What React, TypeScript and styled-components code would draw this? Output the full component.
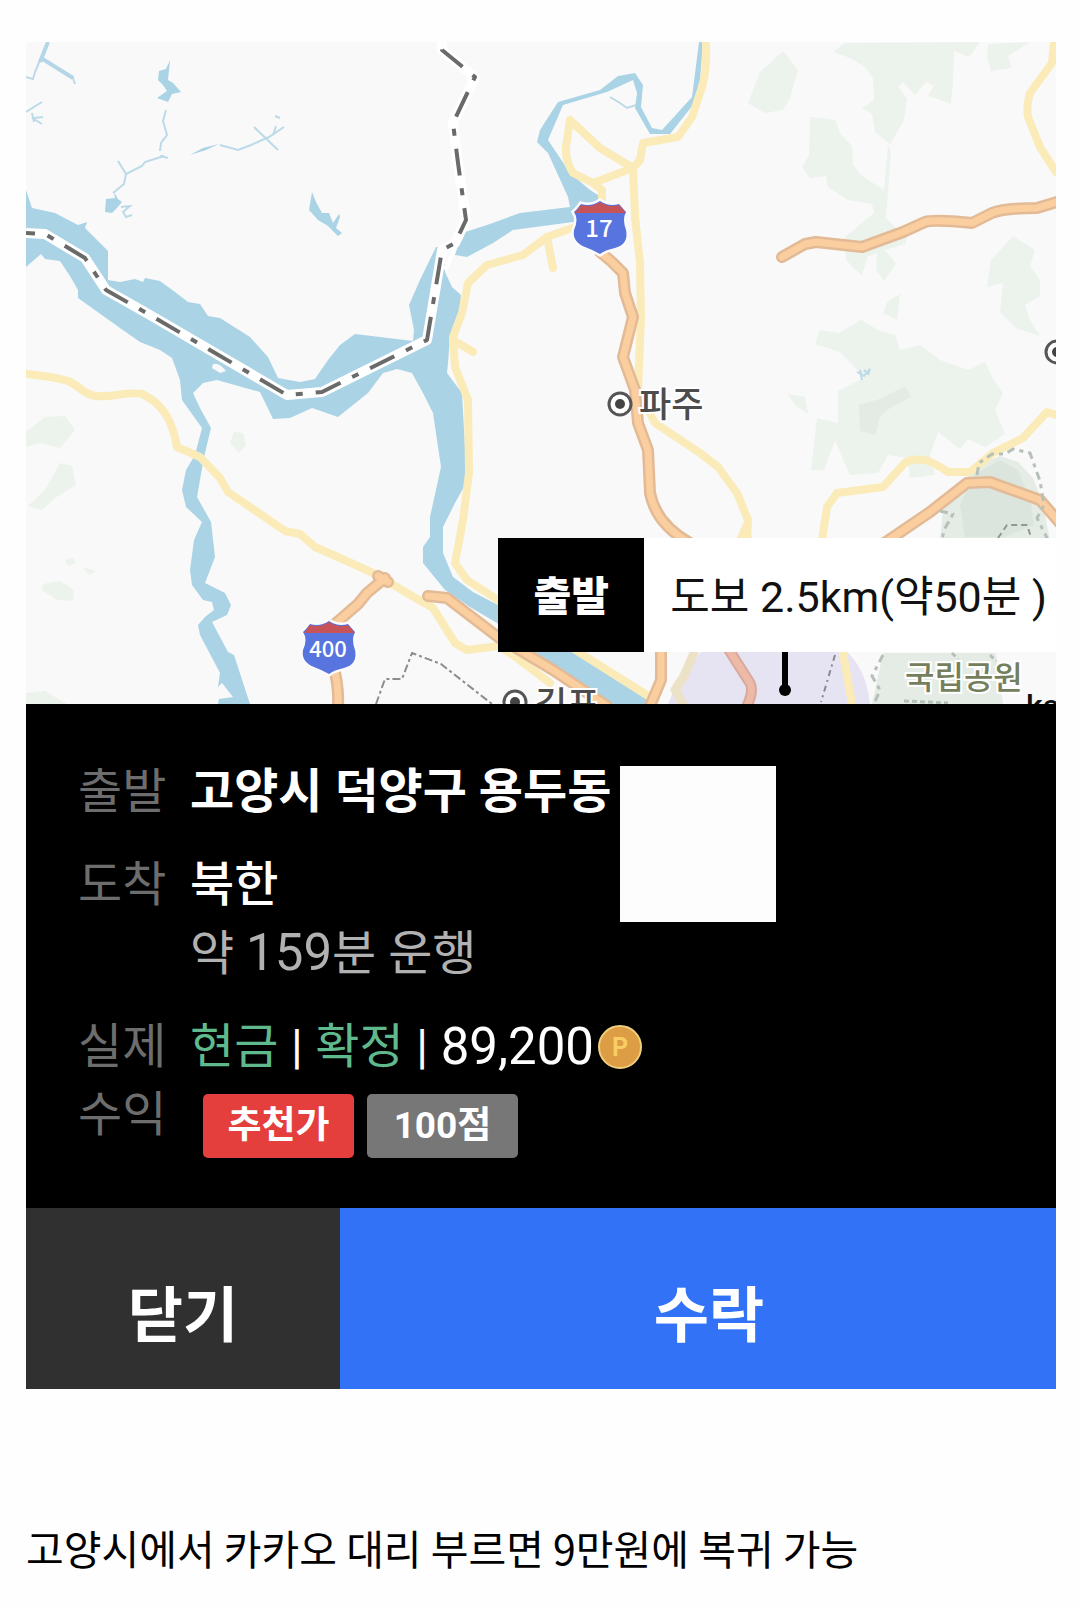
import React from "react";
import styled, { createGlobalStyle } from "styled-components";

const GlobalStyle = createGlobalStyle`
  *, *::before, *::after { box-sizing: border-box; }
  body {
    margin: 0;
    background: #fefefe;
    color: #000;
    font-family: Roboto, "Noto Sans CJK KR", sans-serif;
    word-break: keep-all;
  }
`;

const Page = styled.main`
  padding: 42px 23px 20px 26px;
`;

const Card = styled.article`
  display: flex;
  flex-direction: column;
`;

const MapArea = styled.section`
  position: relative;
  overflow: hidden;
  background: #f9f9f9;
`;

const MapDrawing = styled.svg`
  display: block;
  width: 100%;
  height: auto;
  font-family: "Noto Sans CJK KR", sans-serif;
`;

const WalkBar = styled.div`
  position: absolute;
  right: 0;
  bottom: 52px;
  display: flex;
  height: 114px;
  background: #fff;
`;

const WalkTag = styled.strong`
  display: grid;
  place-items: center;
  width: 146px;
  padding-bottom: 4px;
  background: #000;
  color: #fff;
  font-size: 41px;
  font-weight: 900;
`;

const WalkText = styled.span`
  display: flex;
  align-items: center;
  padding: 0 9px 4px 26px;
  color: #111;
  font-size: 43px;
  white-space: pre;
`;

const Details = styled.section`
  display: flex;
  flex-direction: column;
  gap: 25px;
  padding: 54px 52px 50px;
  background: #000;
  color: #fff;
  font-size: 48px;
  line-height: 68px;
`;

const Route = styled.div`
  display: flex;
  align-items: flex-start;
`;

const Rows = styled.dl`
  display: grid;
  grid-template-columns: 100px auto;
  column-gap: 12px;
  row-gap: 25px;
  margin: 0;
`;

const Label = styled.dt`
  color: #6d6d6d;
`;

const Value = styled.dd<{ $strong?: boolean }>`
  margin: 0;
  font-weight: ${(p) => (p.$strong ? 700 : 400)};
`;

const Destination = styled.div`
  font-weight: 500;
`;

const Duration = styled.div`
  color: #b1b1b1;
`;

const Figure = styled.span`
  font-size: 51px;
`;

const Cover = styled.div`
  width: 156px;
  height: 156px;
  margin: 8px 0 0 9px;
  background: #fdfdfd;
`;

const PayLine = styled.div`
  display: flex;
  align-items: center;
  height: 68px;
`;

const Status = styled.span`
  color: #5fb98c;
`;

const Divider = styled.span`
  width: 37px;
  text-align: center;
`;

const Coin = styled.svg`
  width: 44px;
  height: 44px;
  margin-left: 4px;
`;

const Tags = styled.div`
  display: flex;
  gap: 13px;
  padding: 13px 0 0 13px;
`;

const Tag = styled.span<{ $color: string }>`
  display: flex;
  align-items: center;
  justify-content: center;
  width: 151px;
  height: 64px;
  border-radius: 5px;
  background: ${(p) => p.$color};
  font-size: 37px;
  font-weight: 700;
`;

const Actions = styled.div`
  display: grid;
  grid-template-columns: 314fr 716fr;
`;

const Action = styled.button<{ $color: string; $inset?: number }>`
  height: 181px;
  padding: 24px 0 0 ${(p) => p.$inset ?? 0}px;
  border: 0;
  background: ${(p) => p.$color};
  color: #fff;
  font-family: inherit;
  font-size: 60px;
  font-weight: 700;
  cursor: pointer;
`;

const Caption = styled.p`
  margin: 128px 0 0;
  font-family: "Noto Sans CJK KR", sans-serif;
  font-size: 41px;
  line-height: 60px;
`;

const forests = [
  "783,51 798,70 790,98 783,110 765,113 748,103 760,72",
  "833,52 845,43 980,42 969,57 954,51 953,80 951,104 935,98 928,96 934,86 926,82 915,95 903,82 898,86 907,99 904,120 890,144 875,132 872,114 862,108 874,100 873,78 864,66 850,58",
  "988,44 1030,42 1008,56 1012,68 991,71 987,57",
  "810,117 835,120 841,135 852,146 853,165 862,176 884,190 888,145 891,152 886,218 898,230 910,226 905,244 885,250 896,264 884,281 876,270 877,253 867,257 862,276 846,260 845,237 874,213 872,204 848,200 828,187 826,176 810,178 802,167 809,155",
  "1013,236 1035,250 1030,266 1040,280 1040,296 1025,305 1030,320 1040,336 1016,328 1000,312 1003,283 987,287 991,260",
  "900,294 897,320 883,313 887,302",
  "861,320 878,330 895,335 900,350 920,345 940,360 968,370 985,362 993,379 1003,393 995,410 1005,434 985,447 968,439 960,449 938,432 930,455 935,475 910,478 908,458 888,455 878,473 850,475 835,440 824,470 811,470 817,418 838,423 838,391 864,378 850,362 840,352 815,344 820,330 839,333",
  "788,394 805,397 808,414 795,405",
  "26,432 45,417 65,416 75,430 60,448 40,443 26,447",
  "60,463 72,466 76,485 55,498 42,510 28,506 45,490",
  "43,584 60,581 74,590 73,601 57,600 42,590",
  "26,693 45,691 67,704 26,704",
  "234,432 243,433 246,445 239,453 230,443",
  "65,560 73,558 76,563 68,566",
  "82,567 96,571 90,575",
];

const parks = [
  "977,465 1000,456 1018,462 1033,478 1042,500 1050,540 940,540 943,510 958,488",
  "883,653 996,653 1003,704 872,704",
];

const lakes = [
  "170,60 168,80 173,83 181,92 172,94 168,102 157,98 167,91 163,85 158,80 159,71 166,69",
  "312,192 316,202 322,213 329,213 333,223 339,214 340,217 336,228 342,233 338,236 328,226 318,220 309,210",
  "106,199 115,198 114,192 118,199 122,202 116,209 112,213 105,212",
];

const streams = [
  "M48 42L40 60L35 72L33 79L26 77M41 58L73 78L75 84",
  "M26 112L42 102M32 113L34 122M32 118L42 124M34 118L43 117",
  "M166 110L163 121L167 135L161 143L160 151",
  "M164 156L145 162L142 166L126 174L124 184L113 193M126 174L118 161M160 156L168 158",
  "M220 145L238 150L251 145L269 137L284 127M254 127L278 150M273 135L276 126M275 116L280 118",
  "M121 207L130 206L123 212L126 217L132 215",
  "M610 97L620 103L627 108L636 105",
  "M857 372L864 376L870 369L868 375M860 370L862 380M864 370L867 373",
];

const yellowRoads = [
  "M26 374Q50 376 68 381C80 386 84 395 96 396C112 398 126 391 142 394C166 405 173 425 177 447L200 457L220 478L228 492L250 507L285 531L300 534L315 547L340 558L373 573L407 593L433 608L455 643L467 650L498 646L513 655L550 683",
  "M575 227L547 237L523 255L487 265L468 283L462 313L453 337L455 367L468 400L469 473L463 520L455 563L467 580L498 600L580 653L650 697",
  "M547 237L553 268M453 340L473 352",
  "M706 42Q707 72 702 87L692 117L678 137L643 143L640 160L633 168L635 217L640 263L641 317L638 390L655 423L700 453L718 467L737 493L748 520L747 540",
  "M570 120L600 148L633 168L593 183L573 173Q563 157 567 140L570 120M593 183L602 190V202",
  "M1054 42L1052 63L1030 93Q1026 105 1028 117L1040 147L1056 172",
  "M1056 415L1047 412L1023 438L993 453L970 472L948 472Q930 460 923 460Q908 458 903 465L883 487L837 493L827 507L822 540",
  "M843 653L852 704",
];

const orangeRoads = [
  "M600 252L612 262L623 273L625 293L633 317L623 357L635 390L638 423L648 450L650 493Q656 524 690 543",
  "M782 257L805 244L816 242L862 247L903 232L925 222Q934 219 972 223L992 213Q1004 208 1037 208L1060 201",
  "M880 546L930 512L967 483L990 482L1040 500L1060 523",
  "M378 576L388 582M385 578L367 593L358 604L328 630",
  "M333 665Q339 685 338 706",
  "M428 596L447 598L498 637L553 670L607 706",
  "M661 650V680L650 706",
];

const border =
  "M26 233L45 234L85 258L106 290L150 315L287 395L322 392L427 340L440 262L442 250L455 243L466 220L458 163L453 123L475 77L442 50V42";

type ShieldProps = { x: number; y: number; label: string; size: number };

const Shield = ({ x, y, label, size }: ShieldProps) => (
  <g transform={`translate(${x} ${y})`}>
    <path
      d="M-23-19L-19-24Q-9-21 0-27Q9-21 19-24L26-16Q22-9 26 2Q29 16 15 20Q5 22 0 26Q-7 22-15 19Q-28 14-26 2Q-21-9-26-16Z"
      fill="#5874df"
      stroke="#fbfbfd"
      strokeWidth="5"
      paintOrder="stroke"
    />
    <path d="M-25-15L-19-23Q-9-20 0-26Q9-20 19-23L26-15Z" fill="#c65358" />
    <text x="-1" y="9" textAnchor="middle" fontSize={size} fontWeight="500" fill="#fff">
      {label}
    </text>
  </g>
);

const Town = ({ x, y }: { x: number; y: number }) => (
  <g>
    <circle cx={x} cy={y} r="11" fill="#fff" stroke="#555" strokeWidth="3" />
    <circle cx={x} cy={y} r="5" fill="#444" />
  </g>
);

const RegionMap = () => (
  <MapDrawing viewBox="26 42 1030 662" role="img" aria-label="파주, 김포, 고양 일대 지도">
    <rect x="26" y="42" width="1030" height="662" fill="#f9f9f9" />
    <g fill="#ebf3ec">
      {forests.map((p) => (
        <polygon key={p} points={p} />
      ))}
    </g>
    <path d="M859 405L880 399L905 386L911 397L890 408L880 416L876 435L860 431Z" fill="#e4ebe5" />
    <g fill="#e4ece5">
      {parks.map((p) => (
        <polygon key={p} points={p} />
      ))}
    </g>
    <path d="M974 475L1000 460L1018 470L1031 502L1034 525L1005 537H965L960 505Z" fill="#dbe5dd" />
    <path d="M702 650L677 683L668 704H870Q866 668 845 650Z" fill="#e6e3f3" />

    <g fill="#aad3e6">
      <path d="M26 190L32 208L55 213L78 225L87 222L85 228L108 251V280L120 282L135 279L143 282L145 278L160 281L175 292L188 302L200 304L208 316L220 318L250 337L268 357L278 378L300 382L315 379L328 360L340 345L355 334L413 341L414 330L409 305L420 280L436 247H444L445 272L452 287L461 295L458 320L450 337L448 363L447 373L462 393L465 447L466 483L455 503L443 527V553L453 577L473 592L498 605L545 635L600 666L650 697L645 704H613L573 680L527 653L497 623L470 607L445 590L423 563V547L430 537V517L441 467L433 413L423 393L412 373L397 369L383 373L368 393L338 417L312 408L290 418L273 419L260 392L217 380L203 383L193 393L200 408L211 428L204 457L197 497L211 522L215 557L205 583L225 593L231 605L227 615L212 622L228 652L234 655L250 704H218L219 699L233 697L222 683L218 687L220 673L200 635L198 625L205 617L214 610L212 602L203 600L192 585L190 570L194 540L202 522L186 507L182 490L186 470L195 455L202 428L182 400L180 380L172 358L160 350L140 342L120 328L78 298V290L70 276L60 261L45 259L41 254L26 267Z" />
      <path d="M455 255L462 233L487 225L520 213L570 207L568 197L548 153L537 142L540 130L558 102L600 90L618 76L635 73L643 85L641 107L652 128L662 130L692 97L699 42H703L700 80L693 105L670 134H650L635 108L637 93L633 80L607 92L563 105L548 140L570 173L590 190L598 195V218L573 222L513 230L493 243L467 257Z" />
      {lakes.map((p) => (
        <polygon key={p} points={p} />
      ))}
      <path d="M190 155L203 148L219 144L206 150Z" />
    </g>
    <path d="M213 364Q219 362 226 371L220 373L212 368Z" fill="#f9f9f9" />
    <g fill="none" stroke="#bcdae8" strokeWidth="2">
      {streams.map((d) => (
        <path key={d} d={d} />
      ))}
    </g>
    <path d="M48 42L40 62M41 58L73 78" stroke="#b4d6e6" strokeWidth="4" />
    <path d="M445 270L455 248" stroke="#fff" strokeWidth="4" />

    <g fill="none" stroke="#fbebb9" strokeWidth="8" strokeLinejoin="round" strokeLinecap="round">
      {yellowRoads.map((d) => (
        <path key={d} d={d} />
      ))}
      <path d="M694 653L684 676L675 690L683 704" stroke="#ece2c8" strokeWidth="9" />
    </g>
    <path d="M736 540L748 512L752 540Z" fill="#fbebb9" />

    <g fill="none" strokeLinejoin="round" strokeLinecap="round">
      {orangeRoads.map((d) => (
        <path key={d} d={d} stroke="#e3ba96" strokeWidth="12" />
      ))}
      {orangeRoads.map((d) => (
        <path key={d} d={d} stroke="#fbce9f" strokeWidth="7" />
      ))}
      <path d="M729 650L750 683Q754 691 747 706" stroke="#d9a99b" strokeWidth="11" />
      <path d="M729 650L750 683Q754 691 747 706" stroke="#ecbaa6" strokeWidth="7" />
    </g>

    <g fill="none" strokeLinejoin="round">
      <path d={border} stroke="#fff" strokeWidth="10" />
      <path d={border} stroke="#6a6a6a" strokeWidth="4" strokeDasharray="27 13 7 13" strokeDashoffset="18" />
      <path
        d="M376 704L385 679H402L412 653L441 664L492 704"
        stroke="#8c8c8c"
        strokeWidth="2"
        strokeDasharray="8 3 3 3"
      />
      <path d="M835 655L821 702" stroke="#888" strokeWidth="2" strokeDasharray="6 4 2 4" />
      <path
        d="M977 475L979 463L992 454H1005L1013 449L1030 453L1040 481L1044 505L1037 518L1048 540M940 511L953 514L944 530L942 540M883 655L872 676L880 690L874 704"
        stroke="#b5c0b8"
        strokeWidth="3"
        strokeDasharray="8 5 4 5"
      />
      <path d="M998 538L1007 525H1027L1032 540" stroke="#8c9a90" strokeWidth="2" strokeDasharray="6 4" />
      <path d="M904 701L948 703M952 653L958 659M990 655L996 661" stroke="#b5c0b8" strokeWidth="3" strokeDasharray="5 3" />
    </g>

    <Shield x={600} y={228} label="17" size={24} />
    <Shield x={329} y={648} label="400" size={22} />

    <Town x={620} y={404} />
    <Town x={515} y={702} />
    <Town x={1057} y={352} />
    <g fill="#4c4c4c" stroke="#fff" strokeWidth="4" paintOrder="stroke" fontSize="35" fontWeight="500">
      <text x="639" y="417">파주</text>
      <text x="535" y="717">김포</text>
      <text x="905" y="689" fontSize="32" fill="#747f5d">국립공원</text>
    </g>
    <text x="1026" y="717" fontFamily="Roboto" fontSize="32" fontWeight="500" fill="#111">ks</text>

    <path d="M785 650V690" stroke="#000" strokeWidth="6" />
    <circle cx="785" cy="690" r="6" fill="#000" />
  </MapDrawing>
);

export default function App() {
  return (
    <>
      <GlobalStyle />
      <Page>
        <Card>
          <MapArea>
            <RegionMap />
            <WalkBar>
              <WalkTag>출발</WalkTag>
              <WalkText>도보 2.5km(약50분 )</WalkText>
            </WalkBar>
          </MapArea>

          <Details>
            <Route>
              <Rows>
                <Label>출발</Label>
                <Value $strong>고양시 덕양구 용두동</Value>
                <Label>도착</Label>
                <Value>
                  <Destination>북한</Destination>
                  <Duration>
                    약 <Figure>159</Figure>분 운행
                  </Duration>
                </Value>
              </Rows>
              <Cover />
            </Route>
            <Rows>
              <Label>실제 수익</Label>
              <Value>
                <PayLine>
                  <Status>현금</Status>
                  <Divider>|</Divider>
                  <Status>확정</Status>
                  <Divider>|</Divider>
                  <Figure>89,200</Figure>
                  <Coin viewBox="0 0 44 44" role="img" aria-label="포인트">
                    <circle cx="22" cy="22" r="21" fill="#dc9d45" stroke="#efcf7c" strokeWidth="2" />
                    <text x="22" y="31" textAnchor="middle" fontSize="25" fontWeight="700" fill="#f8cd63">
                      P
                    </text>
                  </Coin>
                </PayLine>
                <Tags>
                  <Tag $color="#e43f3c">추천가</Tag>
                  <Tag $color="#777777">100점</Tag>
                </Tags>
              </Value>
            </Rows>
          </Details>

          <Actions>
            <Action type="button" $color="#303030">닫기</Action>
            <Action type="button" $color="#3172f6" $inset={22}>수락</Action>
          </Actions>
        </Card>
        <Caption>고양시에서 카카오 대리 부르면 9만원에 복귀 가능</Caption>
      </Page>
    </>
  );
}
